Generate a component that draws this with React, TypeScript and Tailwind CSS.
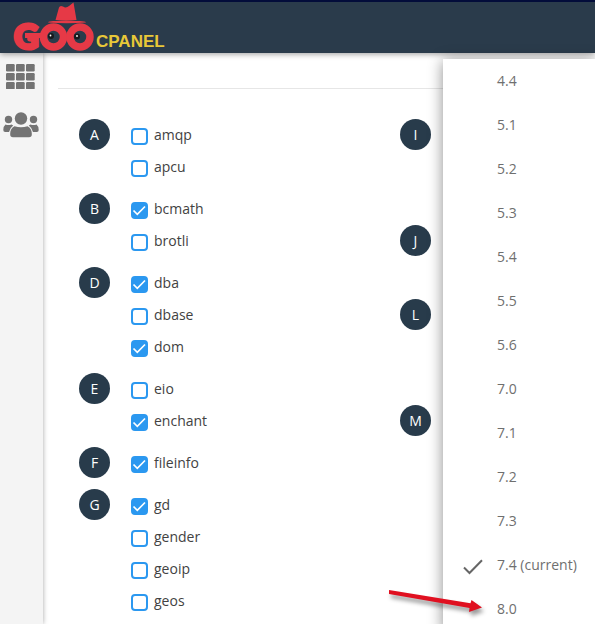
import { useState } from 'react';

type Group = {
  letter: string;
  items: string[];
};

const groups: Group[] = [
  { letter: 'A', items: ['amqp', 'apcu'] },
  { letter: 'B', items: ['bcmath', 'brotli'] },
  { letter: 'D', items: ['dba', 'dbase', 'dom'] },
  { letter: 'E', items: ['eio', 'enchant'] },
  { letter: 'F', items: ['fileinfo'] },
  { letter: 'G', items: ['gd', 'gender', 'geoip', 'geos'] },
];

// Second column, the height keeps room for the extensions of each letter
const sideGroups = [
  { letter: 'I', height: 'h-24' },
  { letter: 'J', height: 'h-16' },
  { letter: 'L', height: 'h-24' },
  { letter: 'M', height: 'h-24' },
];

const versions = ['4.4', '5.1', '5.2', '5.3', '5.4', '5.5', '5.6', '7.0', '7.1', '7.2', '7.3', '7.4', '8.0'];
const currentVersion = '7.4';

function Logo() {
  return (
    <svg width="168" height="60" viewBox="0 0 168 60" role="img" aria-label="GOO CPANEL">
      <g fill="#e63946">
        <path d="M55.500 20 L59 7.500 Q60 5 63 6.500 Q66 8.500 69 6 L73.500 2.500 L76.500 20 Q66 21.500 55.500 20Z" />
        <path d="M48 22.500 Q49 21 53 21 H80 Q85 21 86 22.500 Q67 24 48 22.500Z" />
        <text x="14" y="49" fontFamily="Lato, sans-serif" fontWeight="900" fontSize="34" stroke="#e63946" strokeWidth="3.200">G</text>
        <rect x="25" y="33" width="18" height="5" />
      </g>
      <circle cx="53.500" cy="37" r="10" fill="#293c4b" stroke="#e63946" strokeWidth="7.500" />
      <circle cx="80" cy="37" r="10" fill="#293c4b" stroke="#e63946" strokeWidth="7.500" />
      <circle cx="51" cy="36" r="3" fill="#17191c" />
      <circle cx="77" cy="36.500" r="3" fill="#17191c" />
      <circle cx="50.500" cy="35.500" r="0.900" fill="#fff" />
      <circle cx="77" cy="36" r="0.900" fill="#fff" />
      <text x="96" y="47" fill="#e8c838" fontFamily="Liberation Sans, Arial, sans-serif" fontWeight="700" fontSize="17">CPANEL</text>
    </svg>
  );
}

function GridIcon() {
  return (
    <svg width="29" height="25" viewBox="0 0 29 25" fill="#737373">
      {[0, 9, 18].map((y) =>
        [0, 10, 20].map((x) => <rect key={`${x}-${y}`} x={x} y={y} width="8.700" height="7.500" rx="1.200" />)
      )}
    </svg>
  );
}

function PeopleIcon() {
  return (
    <svg width="36" height="26" viewBox="0 0 36 26" fill="#737373">
      <circle cx="18" cy="6.500" r="6.200" />
      <circle cx="5.500" cy="7.500" r="3.700" />
      <circle cx="30.500" cy="7.500" r="3.700" />
      <path d="M11.500 14.200 Q18 16.500 24.500 14.200 Q28.800 16.500 28.800 21.500 V22.500 Q28.800 25.300 26 25.300 H10 Q7.200 25.300 7.200 22.500 V21.500 Q7.200 16.500 11.500 14.200Z" />
      <path d="M2.500 12.500 Q5.500 13.600 8.500 12.500 L10.200 13.500 Q6.800 16 6 20 H2.200 Q0.300 20 0.300 18 Q0.300 14.200 2.500 12.500Z" />
      <path d="M33.500 12.500 Q30.500 13.600 27.500 12.500 L25.800 13.500 Q29.200 16 30 20 H33.800 Q35.700 20 35.700 18 Q35.700 14.200 33.500 12.500Z" />
    </svg>
  );
}

function Letter({ children }: { children: string }) {
  return (
    <span className="flex size-[31px] shrink-0 items-center justify-center rounded-full bg-[#283b4b] text-sm font-medium text-white">
      {children}
    </span>
  );
}

export default function App() {
  const [enabled, setEnabled] = useState<string[]>(['bcmath', 'dba', 'dom', 'enchant', 'fileinfo', 'gd']);
  const [version, setVersion] = useState(currentVersion);

  const toggle = (name: string) => {
    setEnabled((prev) => (prev.includes(name) ? prev.filter((n) => n !== name) : [...prev, name]));
  };

  return (
    <div className="relative flex h-screen flex-col overflow-hidden bg-white font-['Open_Sans','Noto_Sans',sans-serif] text-sm text-[#424242]">
      <header className="relative z-10 h-[53px] shrink-0 bg-[#2a3b4b] shadow-[0_1px_6px_rgba(0,0,0,0.4)]">
        <div className="absolute inset-x-0 top-0 h-0.5 bg-[#020c3a]" />
        <a href="#" className="relative inline-block">
          <Logo />
        </a>
      </header>

      <div className="flex min-h-0 flex-1">
        <nav className="flex w-[43px] shrink-0 flex-col items-center gap-[23px] bg-[#f4f4f4] pt-[11px] pr-0.5 shadow-[0_0_5px_rgba(0,0,0,0.35)]">
          <button type="button" aria-label="Apps">
            <GridIcon />
          </button>
          <button type="button" aria-label="Users">
            <PeopleIcon />
          </button>
        </nav>

        <main className="min-w-0 flex-1 pl-[15px]">
          <hr className="mt-[35px] border-[#e6e6e6]" />
          <div className="flex pt-[30px] pl-[21px]">
            <div className="flex w-[321px] shrink-0 flex-col gap-2.5">
              {groups.map((group) => (
                <section key={group.letter} className="flex gap-[21px]">
                  <Letter>{group.letter}</Letter>
                  <div>
                    {group.items.map((name) => (
                      <label key={name} className="flex h-8 items-center gap-1.5">
                        <span className="mt-[3px] grid size-[17px]">
                          <input
                            type="checkbox"
                            checked={enabled.includes(name)}
                            onChange={() => toggle(name)}
                            className="peer col-start-1 row-start-1 size-[17px] appearance-none rounded-sm border-2 border-[#2b98f0] bg-white checked:bg-[#2b98f0]"
                          />
                          <svg
                            viewBox="0 0 17 17"
                            className="pointer-events-none invisible col-start-1 row-start-1 size-[17px] peer-checked:visible"
                          >
                            <path d="M2.500 8.500 L6.300 12.300 L14 4.500" fill="none" stroke="#fff" strokeWidth="1.700" />
                          </svg>
                        </span>
                        <span>{name}</span>
                      </label>
                    ))}
                  </div>
                </section>
              ))}
            </div>
            <div className="flex flex-col gap-2.5">
              {sideGroups.map((group) => (
                <section key={group.letter} className={group.height}>
                  <Letter>{group.letter}</Letter>
                </section>
              ))}
            </div>
          </div>
        </main>
      </div>

      <ul
        role="listbox"
        aria-label="PHP version"
        className="absolute top-[59px] right-0 z-20 w-[152px] bg-white text-[#6f6f6f] shadow-[0_2px_14px_rgba(0,0,0,0.45)]"
      >
        {versions.map((v) => (
          <li key={v} role="option" aria-selected={v === version}>
            <button type="button" onClick={() => setVersion(v)} className="flex h-11 w-full items-center pl-5">
              <span className="w-[34px]">
                {v === version && (
                  <svg width="20" height="16" viewBox="0 0 20 16" className="mt-1">
                    <path d="M1 8.500 L6.500 14 L19 1.200" fill="none" stroke="#666" strokeWidth="2" />
                  </svg>
                )}
              </span>
              {v === currentVersion ? `${v} (current)` : v}
            </button>
          </li>
        ))}
      </ul>

      {/* pointer to the newest version */}
      <svg
        width="100"
        height="34"
        viewBox="0 0 100 34"
        className="pointer-events-none absolute top-[586px] right-[110px] z-30 drop-shadow-[2px_4px_2px_rgba(0,0,0,0.4)]"
      >
        <path d="M4 4 L85.500 17.300 L86.500 14 L97 21.500 L84 26 L84.500 22 L4 8Z" fill="#e01020" />
      </svg>
    </div>
  );
}
